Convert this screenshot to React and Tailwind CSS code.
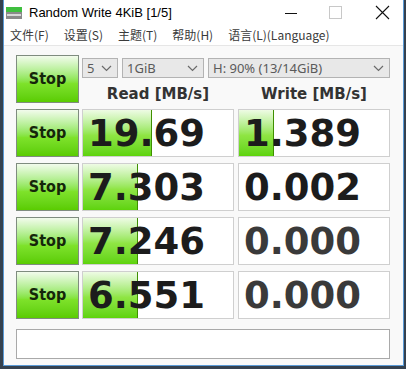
import React from 'react';

const rows = [
  { read: '19.69', write: '1.389', readBar: 69, writeBar: 35, dim: false },
  { read: '7.303', write: '0.002', readBar: 55, writeBar: 0, dim: false },
  { read: '7.246', write: '0.000', readBar: 55, writeBar: 0, dim: true },
  { read: '6.551', write: '0.000', readBar: 55, writeBar: 0, dim: true },
];

function StopButton() {
  return (
    <button
      type="button"
      className="flex h-[48px] w-[63px] shrink-0 items-center justify-center border border-[#7f8c7f] bg-gradient-to-b from-[#f2fbec] via-[#7ee22a] via-60% to-[#5acc00] font-['DejaVu_Sans_Condensed','Liberation_Sans',sans-serif] text-[16px] font-bold text-[#15260a]"
    >
      Stop
    </button>
  );
}

function ValueBox({ value, bar, dim }) {
  return (
    <div className="relative h-[48px] w-[152px] border border-[#cfcfcf] bg-white">
      {bar > 0 && (
        <div
          className="absolute left-0 top-0 h-full border-r border-[#3f8f00] bg-gradient-to-b from-[#eefbe4] via-[#8fe543] via-55% to-[#5ed30a]"
          style={{ width: bar }}
        />
      )}
      <div
        className={`relative flex h-full items-center pl-[5px] font-['DejaVu_Sans',sans-serif] text-[37px] font-bold leading-none ${
          dim ? 'text-[#3a3a3a]' : 'text-[#1c1c1c]'
        }`}
      >
        {value}
      </div>
    </div>
  );
}

function Chevron() {
  return (
    <svg width="11" height="7" viewBox="0 0 11 7" className="shrink-0">
      <path d="M1 1l4.5 4.5L10 1" fill="none" stroke="#6a6a6a" strokeWidth="1.2" />
    </svg>
  );
}

function Select({ label, width }) {
  return (
    <div
      className="flex h-[20px] items-center justify-between border border-[#b3b3b3] bg-[#e8e8e8] pl-[4px] pr-[5px] font-['Noto_Sans',sans-serif] text-[13px] text-[#5a5a5a]"
      style={{ width }}
    >
      <span className="leading-none">{label}</span>
      <Chevron />
    </div>
  );
}

function AppIcon() {
  return (
    <svg width="16" height="16" viewBox="0 0 16 16">
      <rect x="0" y="2" width="16" height="5" fill="#3fbf3f" />
      <rect x="0" y="7" width="16" height="7" fill="#8a8a8a" />
      <rect x="1" y="9" width="14" height="2" fill="#d8d8d8" />
    </svg>
  );
}

export default function App() {
  return (
    <div className="h-[369px] w-[406px] overflow-hidden bg-[#34414f]">
      <div className="ml-[3px] flex h-[366px] w-[401px] flex-col border-x border-b border-[#5a9ad6] bg-white">
        <div className="flex h-[25px] items-center pl-[1px]">
          <div className="ml-[1px] mt-[1px]">
            <AppIcon />
          </div>
          <span className="ml-[7px] font-['Liberation_Sans',sans-serif] text-[13px] text-black">
            Random Write 4KiB [1/5]
          </span>
          <div className="ml-auto flex items-center">
            <svg width="14" height="14" viewBox="0 0 14 14" className="mr-[31px]">
              <path d="M1 7.5h12" stroke="#111" strokeWidth="1" />
            </svg>
            <svg width="13" height="13" viewBox="0 0 13 13" className="mr-[33px]">
              <rect x="0.5" y="0.5" width="12" height="12" fill="none" stroke="#c8c8c8" />
            </svg>
            <svg width="15" height="15" viewBox="0 0 15 15" className="mr-[13px]">
              <path d="M1 1l13 13M14 1L1 14" stroke="#111" strokeWidth="1.1" />
            </svg>
          </div>
        </div>

        <div className="flex h-[21px] items-center gap-[15px] border-b border-[#e6e6e6] pl-[6px] font-['Noto_Sans_CJK_SC',sans-serif] text-[12px] text-[#3a3a3a]">
          <span>文件(F)</span>
          <span>设置(S)</span>
          <span>主题(T)</span>
          <span>帮助(H)</span>
          <span>语言(L)(Language)</span>
        </div>

        <div className="flex flex-1 flex-col gap-[6px] bg-[#f9f9f9] pl-[12px] pt-[9px]">
          <div className="flex h-[48px] gap-[3px]">
            <StopButton />
            <div className="flex flex-col">
              <div className="mt-[3px] flex gap-[4px]">
                <Select label="5" width={36} />
                <Select label="1GiB" width={82} />
                <Select label="H: 90% (13/14GiB)" width={182} />
              </div>
              <div className="mt-[7px] flex gap-[4px] font-['DejaVu_Sans',sans-serif] text-[15px] font-bold leading-[18px] text-[#333]">
                <div className="w-[152px] text-center">Read [MB/s]</div>
                <div className="w-[152px] text-center">Write [MB/s]</div>
              </div>
            </div>
          </div>

          {rows.map((r, i) => (
            <div key={i} className="flex gap-[3px]">
              <StopButton />
              <div className="flex gap-[4px]">
                <ValueBox value={r.read} bar={r.readBar} dim={false} />
                <ValueBox value={r.write} bar={r.writeBar} dim={r.dim} />
              </div>
            </div>
          ))}

          <div className="mt-[4px] h-[30px] w-[374px] border border-[#a9a9a9] bg-white" />
        </div>
      </div>
    </div>
  );
}
